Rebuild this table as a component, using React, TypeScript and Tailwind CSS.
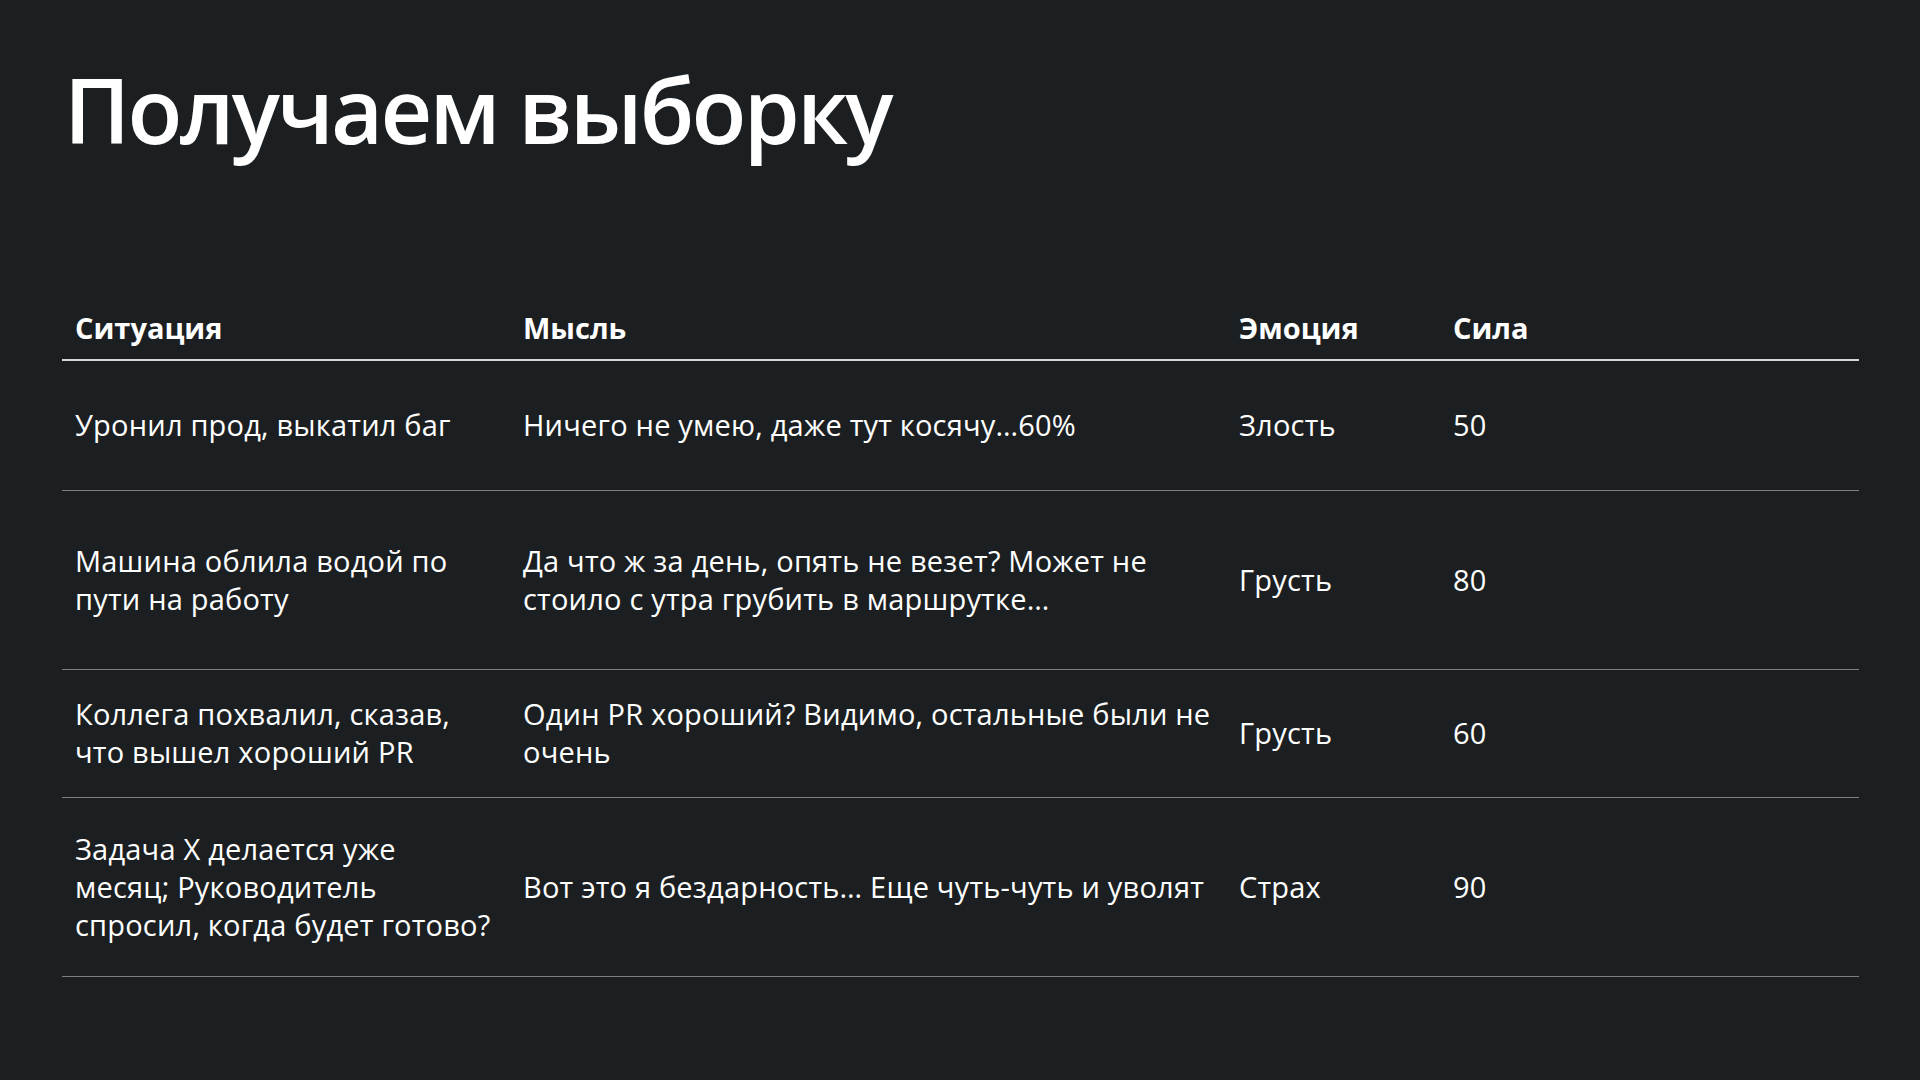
import React from 'react';

interface Row {
  situation: string[];
  thought: string[];
  emotion: string;
  strength: string;
  height: string;
}

const rows: Row[] = [
  {
    situation: ['Уронил прод, выкатил баг'],
    thought: ['Ничего не умею, даже тут косячу…60%'],
    emotion: 'Злость',
    strength: '50',
    height: 'h-[130px]',
  },
  {
    situation: ['Машина облила водой по', 'пути на работу'],
    thought: ['Да что ж за день, опять не везет? Может не', 'стоило с утра грубить в маршрутке…'],
    emotion: 'Грусть',
    strength: '80',
    height: 'h-[179px]',
  },
  {
    situation: ['Коллега похвалил, сказав,', 'что вышел хороший PR'],
    thought: ['Один PR хороший? Видимо, остальные были не', 'очень'],
    emotion: 'Грусть',
    strength: '60',
    height: 'h-[128px]',
  },
  {
    situation: ['Задача X делается уже', 'месяц; Руководитель', 'спросил, когда будет готово?'],
    thought: ['Вот это я бездарность… Еще чуть-чуть и уволят'],
    emotion: 'Страх',
    strength: '90',
    height: 'h-[179px]',
  },
];

const Lines: React.FC<{ lines: string[] }> = ({ lines }) => (
  <>
    {lines.map((l, i) => (
      <div key={i} className="whitespace-nowrap">
        {l}
      </div>
    ))}
  </>
);

export default function App() {
  return (
    <div
      className="w-[1920px] h-[1080px] bg-[#1c1f21] text-white overflow-hidden"
      style={{ fontFamily: '"Open Sans", "Noto Sans", sans-serif' }}
    >
      <div className="pl-[62px] pr-[61px] pt-[54px]">
        <h1 className="pl-[2px] text-[90px] leading-[110px] font-semibold tracking-[-2.8px]">
          Получаем выборку
        </h1>

        <table className="mt-[145px] w-full border-collapse text-[29px] leading-[38px] tracking-[0.2px]">
          <thead>
            <tr className="border-b-2 border-[#d6d6d6]">
              <th className="w-[448px] pl-[13px] pb-[12px] text-left font-bold tracking-normal">Ситуация</th>
              <th className="w-[716px] pl-[13px] pb-[12px] text-left font-bold tracking-normal">Мысль</th>
              <th className="w-[214px] pl-[13px] pb-[12px] text-left font-bold tracking-normal">Эмоция</th>
              <th className="pl-[13px] pb-[12px] text-left font-bold tracking-normal">Сила</th>
            </tr>
          </thead>
          <tbody>
            {rows.map((r, i) => (
              <tr key={i} className={`${r.height} border-b border-[#7d7f80]`}>
                <td className="pl-[13px] align-middle">
                  <Lines lines={r.situation} />
                </td>
                <td className="pl-[13px] align-middle">
                  <Lines lines={r.thought} />
                </td>
                <td className="pl-[13px] align-middle">{r.emotion}</td>
                <td className="pl-[13px] align-middle">{r.strength}</td>
              </tr>
            ))}
          </tbody>
        </table>
      </div>
    </div>
  );
}
